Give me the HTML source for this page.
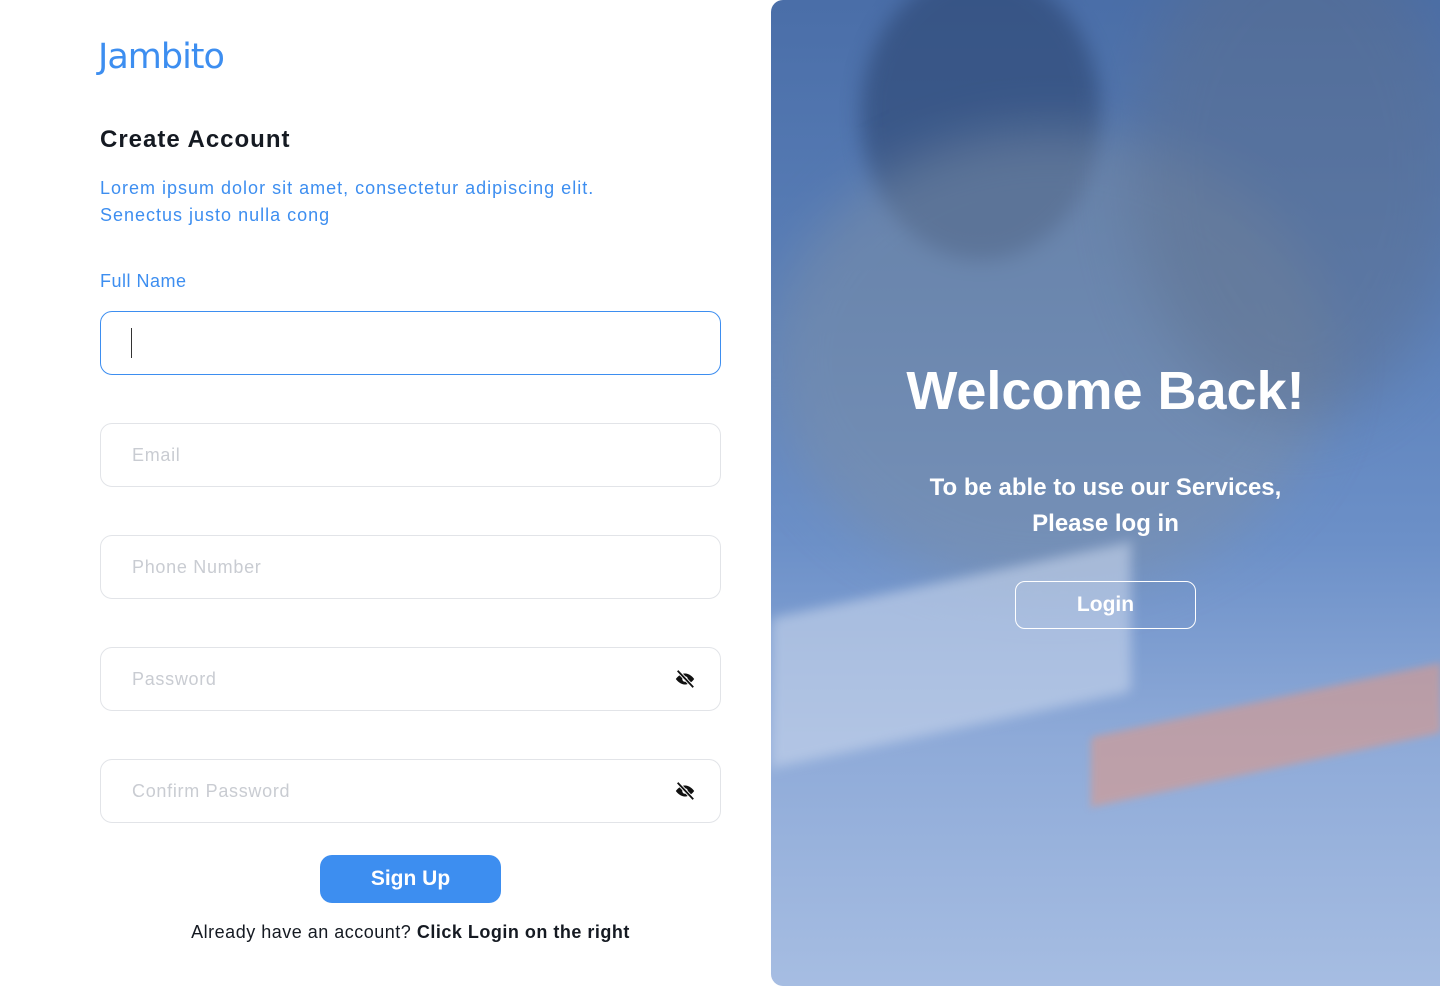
<!DOCTYPE html>
<html><head><meta charset="utf-8"><style>
*{margin:0;padding:0;box-sizing:border-box}
body{width:1440px;height:986px;background:#fff;font-family:"Liberation Sans",sans-serif;position:relative;overflow:hidden}
.logo{position:absolute;left:98px;top:37px;font-size:35px;color:#3d8ef0;font-family:"DejaVu Sans","Liberation Sans",sans-serif;letter-spacing:-1px}
h1{position:absolute;left:100px;top:126px;font-size:24px;font-weight:bold;color:#151a22;letter-spacing:1px}
.desc{position:absolute;left:100px;top:175px;font-size:18px;line-height:27px;color:#3d8ef0;letter-spacing:1px}
.lbl{position:absolute;left:100px;top:271px;font-size:18px;color:#3d8ef0;letter-spacing:.5px}
.in{position:absolute;left:100px;width:621px;height:64px;border:1px solid #e2e4e8;border-radius:12px;font-size:18px;color:#c9ccd2;padding:21px 31px;letter-spacing:.7px}
.in.f{border-color:#3d8ef0}
.caret{position:absolute;left:30px;top:16px;width:1px;height:30px;background:#333}
.eye{position:absolute;right:24px;top:20px}
.btn{position:absolute;left:320px;top:855px;width:181px;height:48px;background:#3d8ef0;border-radius:12px;color:#fff;font-size:21px;font-weight:bold;text-align:center;line-height:48px}
.al{position:absolute;left:0;width:821px;top:922px;text-align:center;font-size:18px;color:#151a22;letter-spacing:.5px}
.panel{position:absolute;left:771px;top:0;width:669px;height:986px;border-radius:12px 0 0 12px;overflow:hidden;
background:linear-gradient(180deg,#4a6ea8 0%,#5a7fb8 30%,#6c90c8 55%,#8eaad8 75%,#a6bde2 100%)}
.a{position:absolute;border-radius:50%}
.w{position:absolute;left:0;right:0;text-align:center;color:#fff}
.lg{position:absolute;left:244px;top:581px;width:181px;height:48px;border:1.5px solid #fff;border-radius:10px;color:#fff;font-size:21px;font-weight:bold;text-align:center;line-height:46px}
</style></head><body>
<div class="logo">Jambito</div>
<h1>Create Account</h1>
<div class="desc">Lorem ipsum dolor sit amet, consectetur adipiscing elit.<br>Senectus justo nulla cong</div>
<div class="lbl">Full Name</div>
<div class="in f" style="top:311px"><div class="caret"></div></div>
<div class="in" style="top:423px">Email</div>
<div class="in" style="top:535px">Phone Number</div>
<div class="in" style="top:647px">Password<svg class="eye" width="22" height="22" viewBox="0 0 24 24"><path d="M2 12s4-6 10-6 10 6 10 6-4 6-10 6S2 12 2 12z" fill="#111"/><circle cx="12" cy="12" r="3" fill="#fff"/><path d="M4 3l17 18" stroke="#fff" stroke-width="4"/><path d="M4 3l17 18" stroke="#111" stroke-width="2"/></svg></div>
<div class="in" style="top:759px">Confirm Password<svg class="eye" width="22" height="22" viewBox="0 0 24 24"><path d="M2 12s4-6 10-6 10 6 10 6-4 6-10 6S2 12 2 12z" fill="#111"/><circle cx="12" cy="12" r="3" fill="#fff"/><path d="M4 3l17 18" stroke="#fff" stroke-width="4"/><path d="M4 3l17 18" stroke="#111" stroke-width="2"/></svg></div>
<div class="btn">Sign Up</div>
<div class="al">Already have an account? <b>Click Login on the right</b></div>
<div class="panel">
<div class="a" style="left:90px;top:-30px;width:240px;height:290px;background:#2c4570;opacity:.6;filter:blur(10px)"></div>
<div class="a" style="left:0;top:130px;width:560px;height:460px;background:#7d8fa6;opacity:.5;filter:blur(25px)"></div>
<div class="a" style="left:360px;top:-80px;width:330px;height:500px;background:#5d6e8a;opacity:.45;filter:blur(30px)"></div>
<div style="position:absolute;left:0;top:580px;width:360px;height:150px;background:#c9d6ec;opacity:.6;transform:skewY(-12deg);filter:blur(6px)"></div>
<div style="position:absolute;left:320px;top:700px;width:350px;height:70px;background:#d59a90;opacity:.65;transform:skewY(-12deg);filter:blur(4px)"></div>
<div class="w" style="top:360px;font-size:54px;font-weight:bold">Welcome Back!</div>
<div class="w" style="top:470px;font-size:24px;font-weight:bold;line-height:36px">To be able to use our Services,<br>Please log in</div>
<div class="lg">Login</div>
</div>
</body></html>
